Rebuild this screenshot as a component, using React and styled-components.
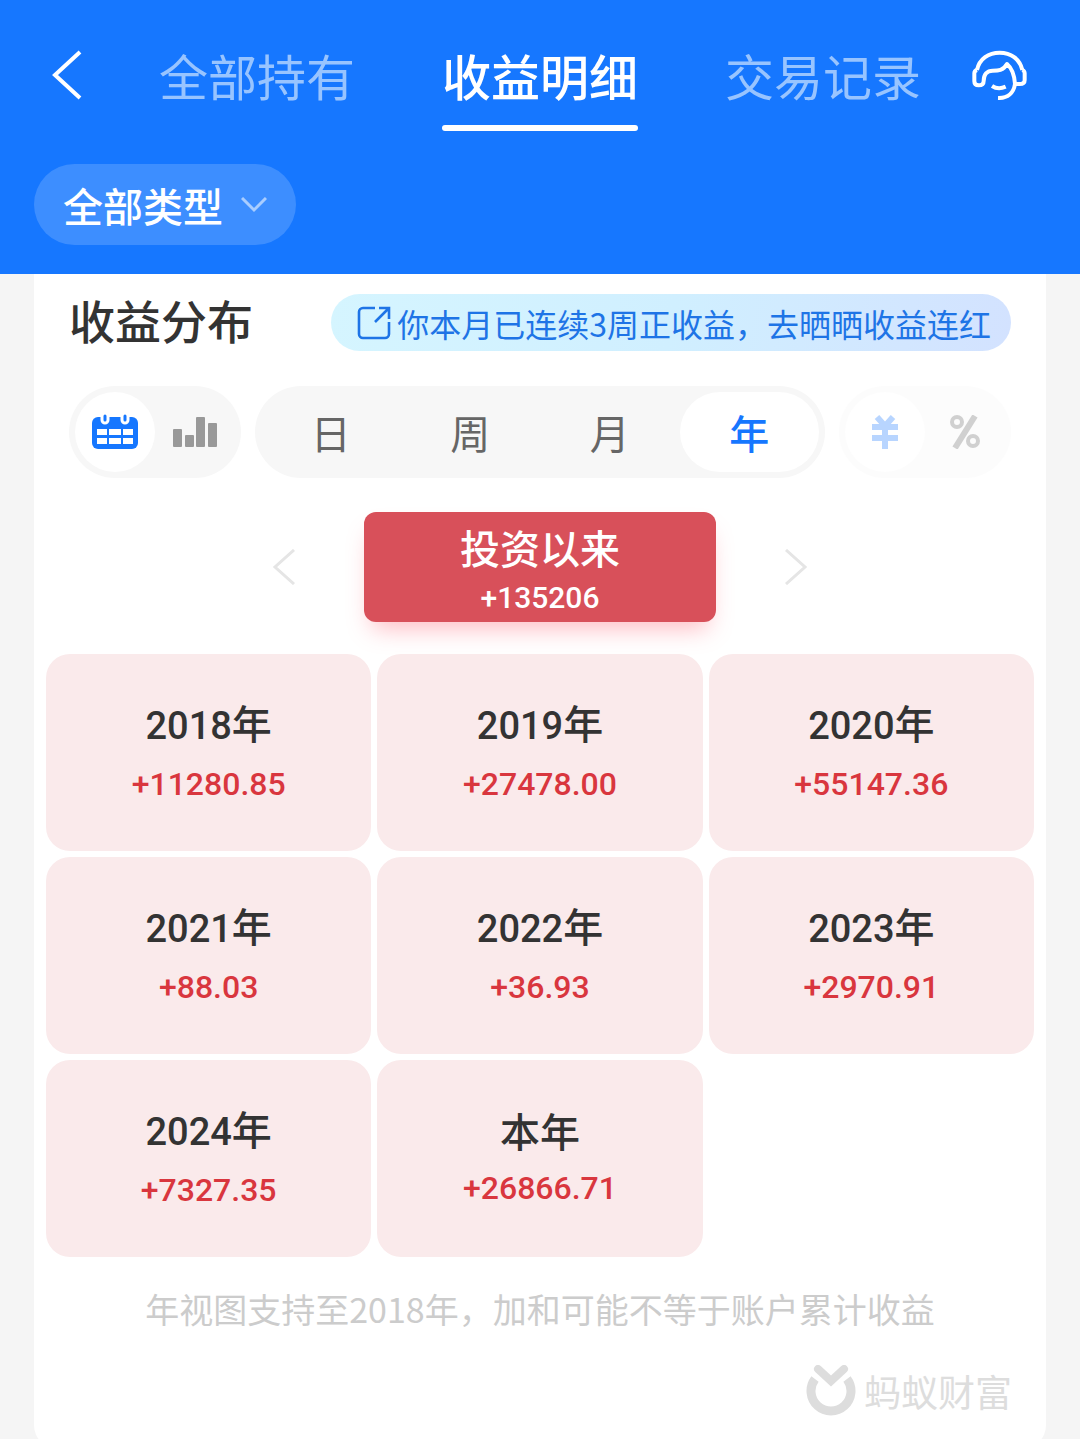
import styled, { createGlobalStyle } from "styled-components";

const GlobalStyle = createGlobalStyle`
  * {
    box-sizing: border-box;
  }
  body {
    margin: 0;
    background: #f5f5f5;
    font-family: "Noto Sans CJK SC", "Noto Sans", sans-serif;
    color: #333;
  }
  button {
    border: none;
    padding: 0;
    background: none;
    font: inherit;
    color: inherit;
    cursor: pointer;
  }
  svg {
    display: block;
  }
`;

const Page = styled.div`
  height: 100vh;
  display: flex;
  flex-direction: column;
`;

const Header = styled.header`
  flex: none;
  background: #1677ff;
  color: white;
  padding: 43px 34px 29px;
`;

const Nav = styled.nav`
  display: flex;
  align-items: flex-start;
  justify-content: space-between;
  padding: 0 18px;
`;

const IconButton = styled.button`
  min-width: ${(props) => (props.$wide ? "56px" : "0")};
  height: 64px;
  display: flex;
  align-items: center;
`;

const Tabs = styled.div`
  display: flex;
  gap: 87px;
`;

const Tab = styled.button`
  height: 88px;
  display: flex;
  flex-direction: column;
  justify-content: space-between;
  font-size: 49px;
  line-height: 64px;
  white-space: nowrap;
  font-weight: ${(props) => (props.$active ? 500 : 400)};
  color: ${(props) => (props.$active ? "white" : "#98c4ff")};
  &::after {
    content: "";
    width: 100%;
    height: 6px;
    border-radius: 3px;
    background: ${(props) => (props.$active ? "white" : "transparent")};
  }
`;

const Filter = styled.button`
  display: flex;
  align-items: center;
  gap: 18px;
  height: 81px;
  margin-top: 33px;
  padding: 1px 29px 0;
  border-radius: 41px;
  background: #3d8eff;
  font-size: 40px;
  line-height: 60px;
  font-weight: 500;
`;

const Content = styled.main`
  flex: 1;
  min-height: 0;
  overflow-y: auto;
  scrollbar-width: none;
  padding: 0 34px;
`;

const Card = styled.section`
  background: white;
  border-radius: 0 0 24px 24px;
  padding: 20px 12px 32px;
`;

const TitleRow = styled.div`
  display: flex;
  align-items: flex-start;
  justify-content: space-between;
  padding: 0 23px;
`;

const Title = styled.h1`
  margin: 0;
  font-size: 46px;
  line-height: 50px;
  font-weight: 500;
`;

const Share = styled.button`
  display: flex;
  align-items: center;
  gap: 6px;
  height: 57px;
  padding: 0 20px 0 26px;
  border-radius: 29px;
  background: linear-gradient(100deg, #d5f5ff, #d0efff 50%, #d3e2ff);
  color: #1e74e6;
  font-size: 32px;
  line-height: 48px;
  white-space: nowrap;
`;

const Switches = styled.div`
  display: flex;
  gap: 14px;
  margin-top: 35px;
  padding: 0 23px;
`;

const Switch = styled.div`
  flex: ${(props) => (props.$wide ? 1 : "none")};
  display: flex;
  height: 92px;
  padding: 6px;
  border-radius: 46px;
  background: #f7f7f7;
  opacity: ${(props) => (props.$faded ? 0.3 : 1)};
`;

const Option = styled.button`
  flex: ${(props) => (props.$wide ? 1 : "none")};
  width: 80px;
  display: flex;
  align-items: center;
  justify-content: center;
  border-radius: 40px;
  background: ${(props) => (props.$active ? "white" : "transparent")};
  color: ${(props) => (props.$active ? "#1677ff" : "#666")};
  font-size: 40px;
  line-height: 60px;
  font-weight: ${(props) => (props.$active ? 500 : 400)};
`;

const Period = styled.div`
  display: flex;
  align-items: center;
  justify-content: center;
  gap: 68px;
  margin-top: 34px;
`;

const Total = styled.button`
  width: 352px;
  height: 110px;
  padding-top: 4px;
  border-radius: 12px;
  background: #d8505a;
  box-shadow: 0 14px 24px -8px rgba(255, 80, 100, 0.4);
  color: white;
  font-size: 40px;
  line-height: 58px;
  font-weight: 500;
`;

const TotalValue = styled.div`
  font-family: Roboto, sans-serif;
  font-size: 30px;
  line-height: 44px;
`;

const Grid = styled.div`
  display: grid;
  grid-template-columns: repeat(3, 1fr);
  gap: 6px;
  margin-top: 32px;
`;

const Year = styled.button`
  height: 197px;
  border-radius: 24px;
  background: #faeaeb;
  font-size: 40px;
  line-height: 58px;
  font-weight: 500;
`;

const Digits = styled.span`
  font-family: Roboto, sans-serif;
  font-size: 38px;
`;

const Amount = styled.div`
  color: #d9363e;
  font-family: Roboto, sans-serif;
  font-size: 32px;
`;

const Note = styled.p`
  margin: 27px 0 0;
  text-align: center;
  color: #ccc;
  font-size: 34px;
  line-height: 50px;
`;

const Brand = styled.div`
  display: flex;
  align-items: center;
  justify-content: flex-end;
  gap: 8px;
  margin-top: 31px;
  padding: 0 22px;
  color: #ddd;
  font-size: 37px;
  line-height: 52px;
`;

const Chevron = ({ width, height, points, color = "currentColor", stroke = 3 }) => (
  <svg width={width} height={height} fill="none" stroke={color} strokeWidth={stroke}>
    <polyline points={points} />
  </svg>
);

const ServiceIcon = () => (
  <svg width="56" height="50" viewBox="36 30 168 150" fill="none" stroke="currentColor" strokeWidth="12" strokeLinejoin="round">
    <path d="M51 90C58 56 86 38 119 38s60 18 68 52" />
    <path d="M51 90c-6 2-8 5-8 10v24c0 8 5 12 13 12 10 0 15-4 15-13 0-20 10-31 27-31 16 0 32 0 43-20 14 12 22 28 24 60h14c10 0 15-4 15-12v-20c0-5-2-8-7-10" />
    <path d="M165 132c-4 27-22 43-51 42" />
    <path d="M96 138c12 8 28 8 41 2" />
  </svg>
);

const ShareIcon = () => (
  <svg width="34" height="34" viewBox="0 0 34 34" fill="none" stroke="currentColor" strokeWidth="2.6">
    <path d="M18 2H6a4 4 0 0 0-4 4v22a4 4 0 0 0 4 4h22a4 4 0 0 0 4-4V16" />
    <path d="M18 16L32 2M22 2h10v11" />
  </svg>
);

const CalendarIcon = () => (
  <svg width="46" height="36" viewBox="0 0 46 36">
    <rect y="3" width="46" height="32" rx="6" fill="#1677ff" />
    <path d="M13 0v6M33 0v6" stroke="white" strokeWidth="9" strokeLinecap="round" />
    <path d="M13 2v4M33 2v4" stroke="#1677ff" strokeWidth="3" strokeLinecap="round" />
    <path d="M5 18h10M17 18h12M31 18h10M5 27h10M17 27h12M31 27h10" stroke="white" strokeWidth="6" />
  </svg>
);

const BarsIcon = () => (
  <svg width="44" height="30" viewBox="0 0 44 30" fill="#999">
    <rect y="12" width="9" height="18" rx="1" />
    <rect x="12" y="18" width="9" height="12" rx="1" />
    <rect x="23" width="9" height="30" rx="1" />
    <rect x="35" y="6" width="9" height="24" rx="1" />
  </svg>
);

const YuanIcon = () => (
  <svg width="26" height="34" viewBox="0 0 26 34" fill="none" stroke="currentColor" strokeWidth="6">
    <path d="M5 2l8 9 8-9M0 12h26M0 23h26M13 11v23" />
  </svg>
);

const PercentIcon = () => (
  <svg width="30" height="34" viewBox="0 0 30 34" fill="none" stroke="currentColor" strokeWidth="4">
    <circle cx="7" cy="7" r="5" />
    <circle cx="23" cy="26" r="5" />
    <path d="M25 1L5 33" strokeWidth="6" />
  </svg>
);

const BrandIcon = () => (
  <svg width="50" height="52" viewBox="0 0 50 52" fill="none" stroke="#ddd">
    <path d="M9 14a20 20 0 1 0 32 0" strokeWidth="9" />
    <path d="M12 4l13 12L38 4" strokeWidth="8" strokeLinecap="round" />
  </svg>
);

const years = [
  { year: "2018", amount: "+11280.85" },
  { year: "2019", amount: "+27478.00" },
  { year: "2020", amount: "+55147.36" },
  { year: "2021", amount: "+88.03" },
  { year: "2022", amount: "+36.93" },
  { year: "2023", amount: "+2970.91" },
  { year: "2024", amount: "+7327.35" },
  { year: null, amount: "+26866.71" },
];

const App = () => {
  return (
    <Page>
      <GlobalStyle />
      <Header>
        <Nav>
          <IconButton $wide aria-label="返回">
            <Chevron width={32} height={50} points="28,2 3,25 28,48" stroke={4} />
          </IconButton>
          <Tabs>
            <Tab>全部持有</Tab>
            <Tab $active>收益明细</Tab>
            <Tab>交易记录</Tab>
          </Tabs>
          <IconButton $wide aria-label="客服">
            <ServiceIcon />
          </IconButton>
        </Nav>
        <Filter>
          全部类型
          <Chevron width={26} height={16} points="1,1 13,13 25,1" color="#a9cdff" />
        </Filter>
      </Header>
      <Content>
        <Card>
          <TitleRow>
            <Title>收益分布</Title>
            <Share>
              <ShareIcon />
              你本月已连续3周正收益，去晒晒收益连红
            </Share>
          </TitleRow>
          <Switches>
            <Switch>
              <Option $active aria-label="日历"><CalendarIcon /></Option>
              <Option aria-label="柱状图"><BarsIcon /></Option>
            </Switch>
            <Switch $wide>
              <Option $wide>日</Option>
              <Option $wide>周</Option>
              <Option $wide>月</Option>
              <Option $wide $active>年</Option>
            </Switch>
            <Switch $faded>
              <Option $active aria-label="金额"><YuanIcon /></Option>
              <Option aria-label="百分比"><PercentIcon /></Option>
            </Switch>
          </Switches>
          <Period>
            <IconButton aria-label="上一页">
              <Chevron width={24} height={36} points="22,1 3,18 22,35" color="#e5e5e5" />
            </IconButton>
            <Total>
              投资以来
              <TotalValue>+135206</TotalValue>
            </Total>
            <IconButton aria-label="下一页">
              <Chevron width={24} height={36} points="2,1 21,18 2,35" color="#e5e5e5" />
            </IconButton>
          </Period>
          <Grid>
            {years.map((item) => (
              <Year key={item.amount}>
                {item.year ? <><Digits>{item.year}</Digits>年</> : "本年"}
                <Amount>{item.amount}</Amount>
              </Year>
            ))}
          </Grid>
          <Note>年视图支持至2018年，加和可能不等于账户累计收益</Note>
          <Brand>
            <BrandIcon />
            蚂蚁财富
          </Brand>
        </Card>
      </Content>
    </Page>
  );
};

export default App;
